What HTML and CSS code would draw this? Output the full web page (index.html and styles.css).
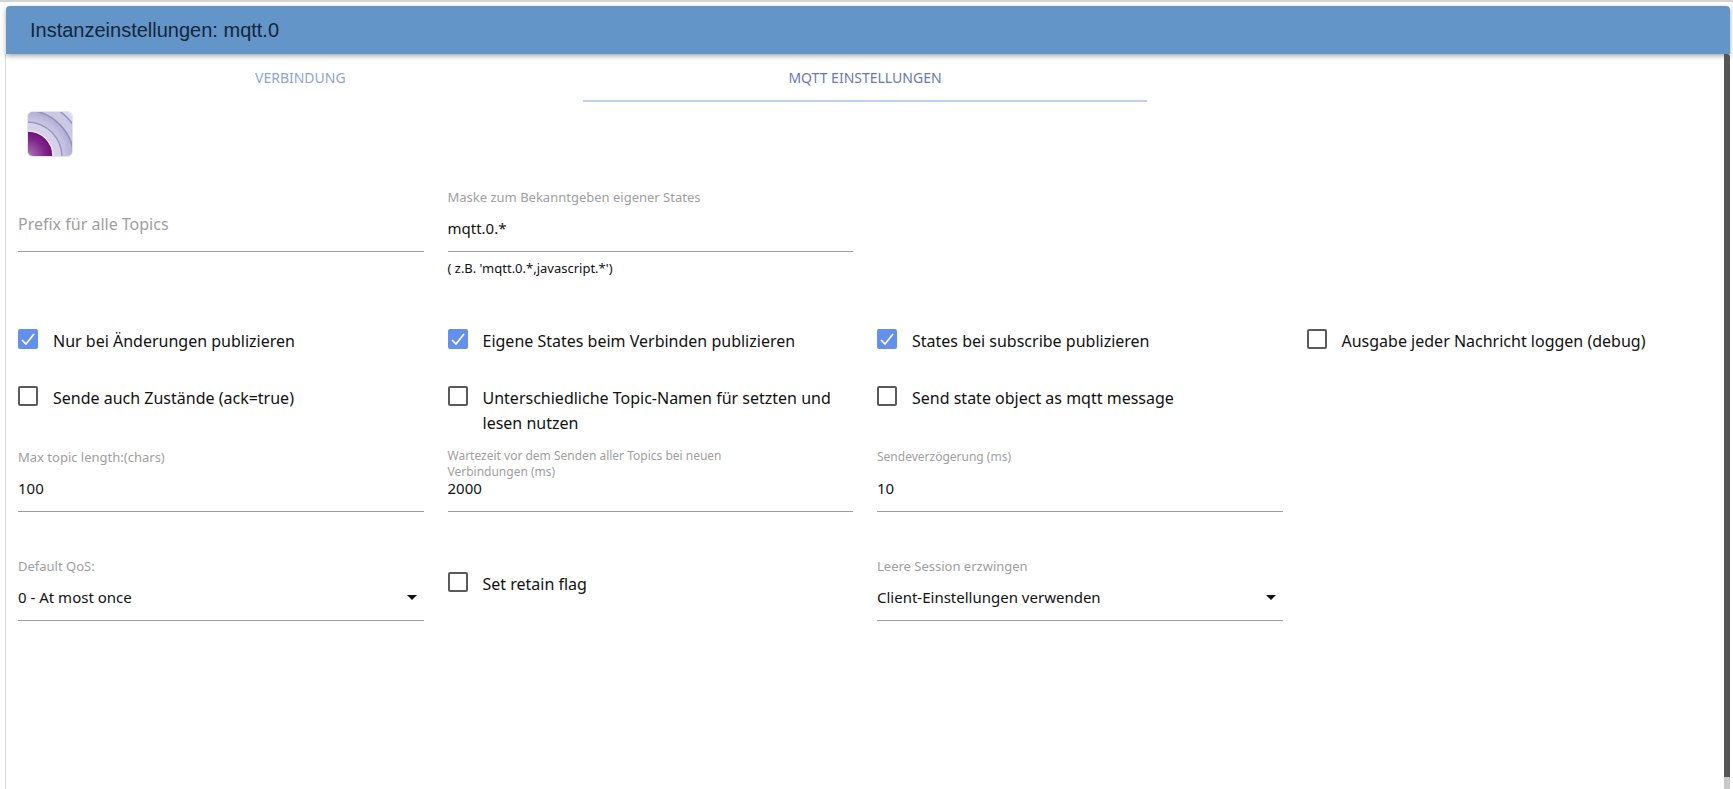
FILE: index.html
```html
<!DOCTYPE html>
<html lang="de">
<head>
<meta charset="utf-8">
<title>Instanzeinstellungen: mqtt.0</title>
<link rel="stylesheet" href="styles.css">
</head>
<body>
<div class="dialog">
  <header class="dialog-header"><h1 class="dialog-title">Instanzeinstellungen: mqtt.0</h1></header>
  <div class="dialog-body">
    <main class="content">
      <nav class="tabs">
        <a class="tab" href="#verbindung">Verbindung</a>
        <a class="tab tab-active" href="#einstellungen">MQTT Einstellungen</a>
      </nav>
      <svg class="logo" viewBox="0 0 48 48" aria-label="MQTT" role="img">
        <defs>
          <linearGradient id="bg" x1="0" y1="1" x2="1" y2="0"><stop offset="0" stop-color="#d6d2ea"/><stop offset="0.55" stop-color="#b9b6dc"/><stop offset="1" stop-color="#e2e0f0"/></linearGradient>
          <radialGradient id="core" gradientUnits="userSpaceOnUse" cx="3" cy="45" r="25"><stop offset="0" stop-color="#a873b4"/><stop offset="0.6" stop-color="#802a8c"/><stop offset="1" stop-color="#6c0a76"/></radialGradient>
          <radialGradient id="band" gradientUnits="userSpaceOnUse" cx="2" cy="46" r="52"><stop offset="0.5" stop-color="#d5d2ea"/><stop offset="0.68" stop-color="#c8c5e3"/><stop offset="0.87" stop-color="#b0acd5"/></radialGradient>
          <clipPath id="tile"><rect x="2" y="2" width="44" height="44" rx="5"/></clipPath>
        </defs>
        <rect x="1" y="1" width="46" height="46" rx="6" fill="#e6e3ef"/>
        <g clip-path="url(#tile)">
          <rect x="2" y="2" width="44" height="44" fill="url(#bg)"/>
          <circle cx="-1" cy="49" r="59" fill="#cbc8e3" stroke="#9491bd" stroke-width="1.5"/>
          <circle cx="-1" cy="49" r="49" fill="url(#band)" stroke="#9491bd" stroke-width="1.5"/>
          <circle cx="1" cy="47" r="35" fill="#d4d1e9" stroke="#9996c2" stroke-width="1.5"/>
          <circle cx="2" cy="46" r="25" fill="url(#core)" stroke="#eee9f5" stroke-width="1.5"/>
        </g>
      </svg>

      <form class="settings">
        <div class="row row-topics">
          <div class="field field-empty">
            <label class="field-label" for="prefix">Prefix für alle Topics</label>
            <input class="field-input" id="prefix" type="text">
          </div>
          <div class="field">
            <label class="field-label" for="mask">Maske zum Bekanntgeben eigener States</label>
            <input class="field-input" id="mask" type="text" value="mqtt.0.*">
            <span class="field-help">( z.B. 'mqtt.0.*,javascript.*')</span>
          </div>
        </div>
        <div class="row row-checks">
          <label class="check"><input class="box" type="checkbox" checked><span>Nur bei Änderungen publizieren</span></label>
          <label class="check"><input class="box" type="checkbox" checked><span>Eigene States beim Verbinden publizieren</span></label>
          <label class="check"><input class="box" type="checkbox" checked><span>States bei subscribe publizieren</span></label>
          <label class="check"><input class="box" type="checkbox"><span>Ausgabe jeder Nachricht loggen (debug)</span></label>
        </div>
        <div class="row row-options">
          <label class="check"><input class="box" type="checkbox"><span>Sende auch Zustände (ack=true)</span></label>
          <label class="check"><input class="box" type="checkbox"><span>Unterschiedliche Topic-Namen für setzten und lesen nutzen</span></label>
          <label class="check"><input class="box" type="checkbox"><span>Send state object as mqtt message</span></label>
        </div>
        <div class="row row-numbers">
          <div class="field">
            <label class="field-label" for="length">Max topic length:(chars)</label>
            <input class="field-input" id="length" type="text" value="100">
          </div>
          <div class="field">
            <label class="field-label field-label-long" for="wait">Wartezeit vor dem Senden aller Topics bei neuen Verbindungen (ms)</label>
            <input class="field-input" id="wait" type="text" value="2000">
          </div>
          <div class="field">
            <label class="field-label field-label-small" for="delay">Sendeverzögerung (ms)</label>
            <input class="field-input" id="delay" type="text" value="10">
          </div>
        </div>
        <div class="row">
          <div class="field">
            <label class="field-label" for="qos">Default QoS:</label>
            <div class="select">
              <select class="field-input" id="qos"><option>0 - At most once</option></select>
              <svg class="caret" viewBox="0 0 10 5"><path d="M0 0h10L5 5z"/></svg>
            </div>
          </div>
          <label class="check check-inline"><input class="box" type="checkbox"><span>Set retain flag</span></label>
          <div class="field">
            <label class="field-label" for="session">Leere Session erzwingen</label>
            <div class="select">
              <select class="field-input" id="session"><option>Client-Einstellungen verwenden</option></select>
              <svg class="caret" viewBox="0 0 10 5"><path d="M0 0h10L5 5z"/></svg>
            </div>
          </div>
        </div>
      </form>
    </main>
    <div class="scrollbar"><div class="scrollbar-thumb"></div></div>
  </div>
</div>
</body>
</html>
```
FILE: styles.css
```css
* { box-sizing: border-box; }

body {
  margin: 0;
  background: #fff;
  color: #111;
  font-family: "Noto Sans", "Open Sans", sans-serif;
}

.dialog {
  display: flex;
  flex-direction: column;
  height: 100vh;
  padding: 4px 3px 0 5px;
  border-top: 2px solid #d2d4d6;
  overflow: hidden;
}

.dialog-header {
  position: relative;
  margin-left: 1px;
  padding: 0 24px;
  border-radius: 4px 4px 0 0;
  background: #6495c8;
  box-shadow: 0 2px 5px rgba(0, 0, 0, 0.35);
}

.dialog-title {
  margin: 0;
  color: #12263c;
  font: 400 20px/48px "Liberation Sans", Arial, sans-serif;
}

.dialog-body {
  display: flex;
  flex: 1;
  border-left: 1px solid #d8d8d8;
}

.content { flex: 1; }

.scrollbar {
  position: relative;
  width: 6px;
  background: #c8c8c8;
}

.scrollbar-thumb {
  height: calc(100% - 12px);
  border-top-right-radius: 3px;
  background: #555;
}

.tabs {
  display: grid;
  grid-template-columns: repeat(3, 1fr);
  padding: 0 12px;
}

.tab {
  height: 48px;
  border-bottom: 2px solid transparent;
  color: #8fa3d2;
  font-size: 14px;
  line-height: 48px;
  text-align: center;
  text-decoration: none;
  text-transform: uppercase;
}

.tab-active {
  border-bottom-color: #bfd0f6;
  color: #6678b8;
}

.logo {
  display: block;
  width: 48px;
  height: 48px;
  margin: 8px 0 30px 20px;
}

.row {
  display: grid;
  grid-template-columns: repeat(4, 1fr);
}

.row-topics { margin-bottom: 53px; }
.row-checks { margin-bottom: 32px; }
.row-options { margin-bottom: 12px; }
.row-numbers { margin-bottom: 45px; }

.field {
  position: relative;
  margin: 0 12px;
}

.field-label {
  display: block;
  width: 80%;
  height: 28px;
  color: #9e9e9e;
  font-size: 13px;
  line-height: 18px;
}

.field-label-small { font-size: 12px; }

.field-label-long {
  font-size: 12px;
  line-height: 16px;
}

.field-empty { padding-top: 28px; }

.field-empty .field-label {
  position: absolute;
  top: 24px;
  left: 0;
  font-size: 16px;
  line-height: 24px;
}

.field-input {
  display: block;
  width: 100%;
  height: 36px;
  padding: 0 0 11px;
  border: 0;
  border-bottom: 1px solid #9e9e9e;
  border-radius: 0;
  outline: 0;
  background: transparent;
  color: #111;
  font: 15px/24px "Noto Sans", "Open Sans", sans-serif;
  appearance: none;
}

.field-help {
  display: block;
  margin-top: 8px;
  font-size: 13px;
  line-height: 16px;
}

.select { position: relative; }

.caret {
  position: absolute;
  top: 10px;
  right: 7px;
  width: 10px;
  height: 5px;
  fill: #111;
  pointer-events: none;
}

.check {
  display: flex;
  align-items: flex-start;
  gap: 15px;
  padding: 0 0 0 12px;
  font-size: 16px;
  line-height: 25px;
}

.check-inline { padding-top: 15px; }

.box {
  flex: none;
  width: 20px;
  height: 20px;
  margin: 0;
  border: 2px solid #5a5a5a;
  border-radius: 2px;
  appearance: none;
}

.box:checked {
  border-color: #648fec;
  background: #648fec url("data:image/svg+xml,%3Csvg xmlns='http://www.w3.org/2000/svg' viewBox='0 0 16 16'%3E%3Cpath d='M2 9l4 4 8-10' fill='none' stroke='white' stroke-width='1.7'/%3E%3C/svg%3E") center / 16px no-repeat;
}
```
